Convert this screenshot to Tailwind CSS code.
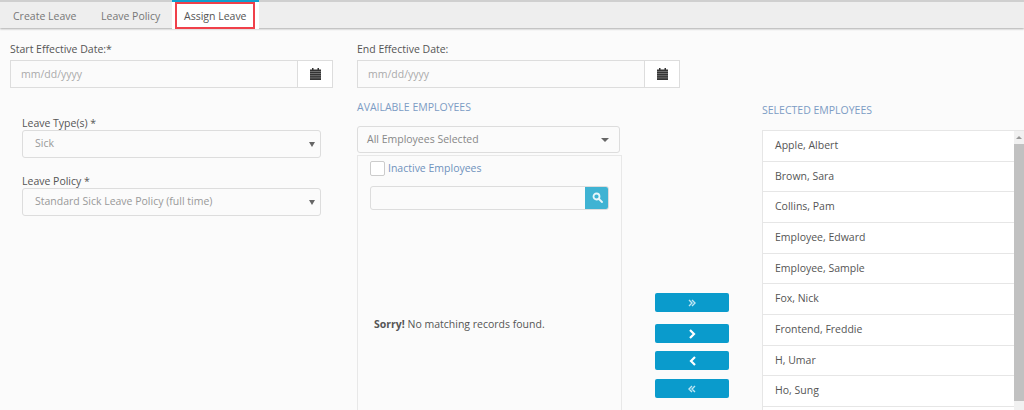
<!DOCTYPE html>
<html><head><meta charset="utf-8"><script src="https://cdn.jsdelivr.net/npm/@tailwindcss/browser@4"></script></head>
<body class="m-0 h-[410px] w-[1024px] overflow-hidden bg-[#fbfbfb] font-['Open_Sans',sans-serif] text-[10.500px] text-[#555]">
<div class="relative flex h-[28px] items-stretch border-t-2 border-[#cfcfcf] bg-[#eeeeee] shadow-[0_1px_2px_#aaa]">
  <div class="w-[86px] pl-[13px] pt-[7px] text-[#777]">Create Leave</div>
  <div class="w-[86px] pl-[15px] pt-[7px] text-[#777]">Leave Policy</div>
  <div class="relative -mt-[2px] h-[29px] w-[87px] border-t-2 border-[#0ea0cf] bg-white px-[3px]">
    <div class="h-[27px] w-[80px] border-2 border-[#f0404a] pl-[7px] pt-[5px] text-[#555]">Assign Leave</div>
  </div>
</div>
<div class="flex h-[382px] overflow-hidden">
  <div class="w-[357px] pl-[10px] pt-[13px]">
    <div class="h-[19px] leading-[16px]">Start Effective Date:*</div>
    <div class="flex h-[28px] w-[323px] border border-[#ddd]">
      <div class="flex-1 bg-[#fbfbfb] pl-[10px] leading-[26px] text-[#aaa]">mm/dd/yyyy</div>
      <div class="flex w-[35px] items-center justify-center border-l border-[#ddd] bg-white">
        <svg width="11" height="12" viewBox="0 0 11 12" fill="#333"><path d="M0 1.500h11V12H0z"/><path d="M2 0h1.500v2H2zM7.500 0H9v2H7.500z"/><path d="M0 3.500h11M0 5.500h11M0 7.700h11M0 9.900h11" stroke="#999" stroke-width=".6"/></svg>
      </div>
    </div>
    <div class="pl-[12px] pt-[28px]">
      <div class="h-[14px] leading-[15px]">Leave Type(s) *</div>
      <div class="flex h-[28px] w-[299px] items-center justify-between rounded-[3px] border border-[#ddd] pl-[12px] pr-[5px] text-[#999]">
        <span>Sick</span><span class="h-0 w-0 border-x-[3px] border-t-[5px] border-x-transparent border-t-[#666]"></span>
      </div>
      <div class="mt-[16px] h-[14px] leading-[15px]">Leave Policy *</div>
      <div class="flex h-[28px] w-[299px] items-center justify-between rounded-[3px] border border-[#ddd] pl-[12px] pr-[5px] text-[#999]">
        <span>Standard Sick Leave Policy (full time)</span><span class="h-0 w-0 border-x-[3px] border-t-[5px] border-x-transparent border-t-[#666]"></span>
      </div>
    </div>
  </div>
  <div class="w-[405px] pt-[13px]">
    <div class="h-[19px] leading-[16px]">End Effective Date:</div>
    <div class="flex h-[28px] w-[323px] border border-[#ddd]">
      <div class="flex-1 bg-[#fbfbfb] pl-[10px] leading-[26px] text-[#aaa]">mm/dd/yyyy</div>
      <div class="flex w-[35px] items-center justify-center border-l border-[#ddd] bg-white">
        <svg width="11" height="12" viewBox="0 0 11 12" fill="#333"><path d="M0 1.500h11V12H0z"/><path d="M2 0h1.500v2H2zM7.500 0H9v2H7.500z"/><path d="M0 3.500h11M0 5.500h11M0 7.700h11M0 9.900h11" stroke="#999" stroke-width=".6"/></svg>
      </div>
    </div>
    <div class="mt-[11px] h-[16px] leading-[16px] text-[#7c9cc4]">AVAILABLE EMPLOYEES</div>
    <div class="mt-[11px] flex">
      <div class="w-[265px]">
        <div class="flex h-[27px] w-[263px] items-center justify-between rounded-[3px] border border-[#ddd] pl-[9px] pr-[10px] text-[#888]">
          <span>All Employees Selected</span><span class="h-0 w-0 border-x-[4px] border-t-[4px] border-x-transparent border-t-[#666]"></span>
        </div>
        <div class="mt-[2px] h-[262px] border border-[#e8e8e8] px-[12px] pt-[5px]">
          <div class="flex items-center gap-[3px]">
            <span class="h-[15px] w-[15px] rounded-[2px] border border-[#ccc] bg-white"></span>
            <span class="text-[#6f92bd]">Inactive Employees</span>
          </div>
          <div class="mt-[9px] flex h-[24px] w-[239px] overflow-hidden rounded-[3px] border border-[#ddd]">
            <div class="flex-1"></div>
            <div class="-my-px -mr-px flex w-[24px] items-center justify-center bg-[#3fb3d3]">
              <svg width="11" height="11" viewBox="0 0 11 11" fill="none" stroke="#e8f6fa" stroke-width="1.800"><circle cx="4.500" cy="4.500" r="3"/><path d="M7 7l3 3" stroke-linecap="round"/></svg>
            </div>
          </div>
          <div class="mt-[107px] pl-[4px]"><b class="font-bold">Sorry!</b> No matching records found.</div>
        </div>
      </div>
      <div class="ml-[33px] w-[74px] pt-[167px]">
        <div class="flex h-[19px] items-center justify-center rounded-[2px] bg-[#0a9bcc]">
          <svg width="8" height="8" viewBox="0 0 8 8" fill="none" stroke="#bfe6f3" stroke-width="1.400"><path d="M1 1l3 3-3 3M4 1l3 3-3 3"/></svg>
        </div>
        <div class="mt-[12px] flex h-[19px] items-center justify-center rounded-[2px] bg-[#0a9bcc]">
          <svg width="9" height="10" viewBox="0 0 9 10" fill="none" stroke="#fff" stroke-width="2.200"><path d="M2 1l4 4-4 4"/></svg>
        </div>
        <div class="mt-[8px] flex h-[19px] items-center justify-center rounded-[2px] bg-[#0a9bcc]">
          <svg width="9" height="10" viewBox="0 0 9 10" fill="none" stroke="#fff" stroke-width="2.200"><path d="M7 1L3 5l4 4"/></svg>
        </div>
        <div class="mt-[9px] flex h-[19px] items-center justify-center rounded-[2px] bg-[#0a9bcc]">
          <svg width="8" height="8" viewBox="0 0 8 8" fill="none" stroke="#bfe6f3" stroke-width="1.400"><path d="M4 1L1 4l3 3M7 1L4 4l3 3"/></svg>
        </div>
      </div>
    </div>
  </div>
  <div class="flex-1 pt-[74px]">
    <div class="h-[28px] leading-[16px] text-[#7c9cc4]">SELECTED EMPLOYEES</div>
    <div class="flex h-[280px] border-t border-l border-[#e6e6e6] bg-white">
      <div class="flex-1">
        <div class="h-[30.670px] border-b border-[#e6e6e6] pl-[12px] leading-[28px]">Apple, Albert</div>
        <div class="h-[30.670px] border-b border-[#e6e6e6] pl-[12px] leading-[28px]">Brown, Sara</div>
        <div class="h-[30.670px] border-b border-[#e6e6e6] pl-[12px] leading-[28px]">Collins, Pam</div>
        <div class="h-[30.670px] border-b border-[#e6e6e6] pl-[12px] leading-[28px]">Employee, Edward</div>
        <div class="h-[30.670px] border-b border-[#e6e6e6] pl-[12px] leading-[28px]">Employee, Sample</div>
        <div class="h-[30.670px] border-b border-[#e6e6e6] pl-[12px] leading-[28px]">Fox, Nick</div>
        <div class="h-[30.670px] border-b border-[#e6e6e6] pl-[12px] leading-[28px]">Frontend, Freddie</div>
        <div class="h-[30.670px] border-b border-[#e6e6e6] pl-[12px] leading-[28px]">H, Umar</div>
        <div class="h-[30.670px] border-b border-[#e6e6e6] pl-[12px] leading-[28px]">Ho, Sung</div>
      </div>
      <div class="flex w-[10px] flex-col bg-[#f1f1f1]">
        <div class="flex h-[13px] items-center justify-center"><span class="h-0 w-0 border-x-[3px] border-b-[3px] border-x-transparent border-b-[#999]"></span></div>
        <div class="h-[257px] bg-[#c1c1c1]"></div>
      </div>
    </div>
  </div>
</div>
</body></html>
